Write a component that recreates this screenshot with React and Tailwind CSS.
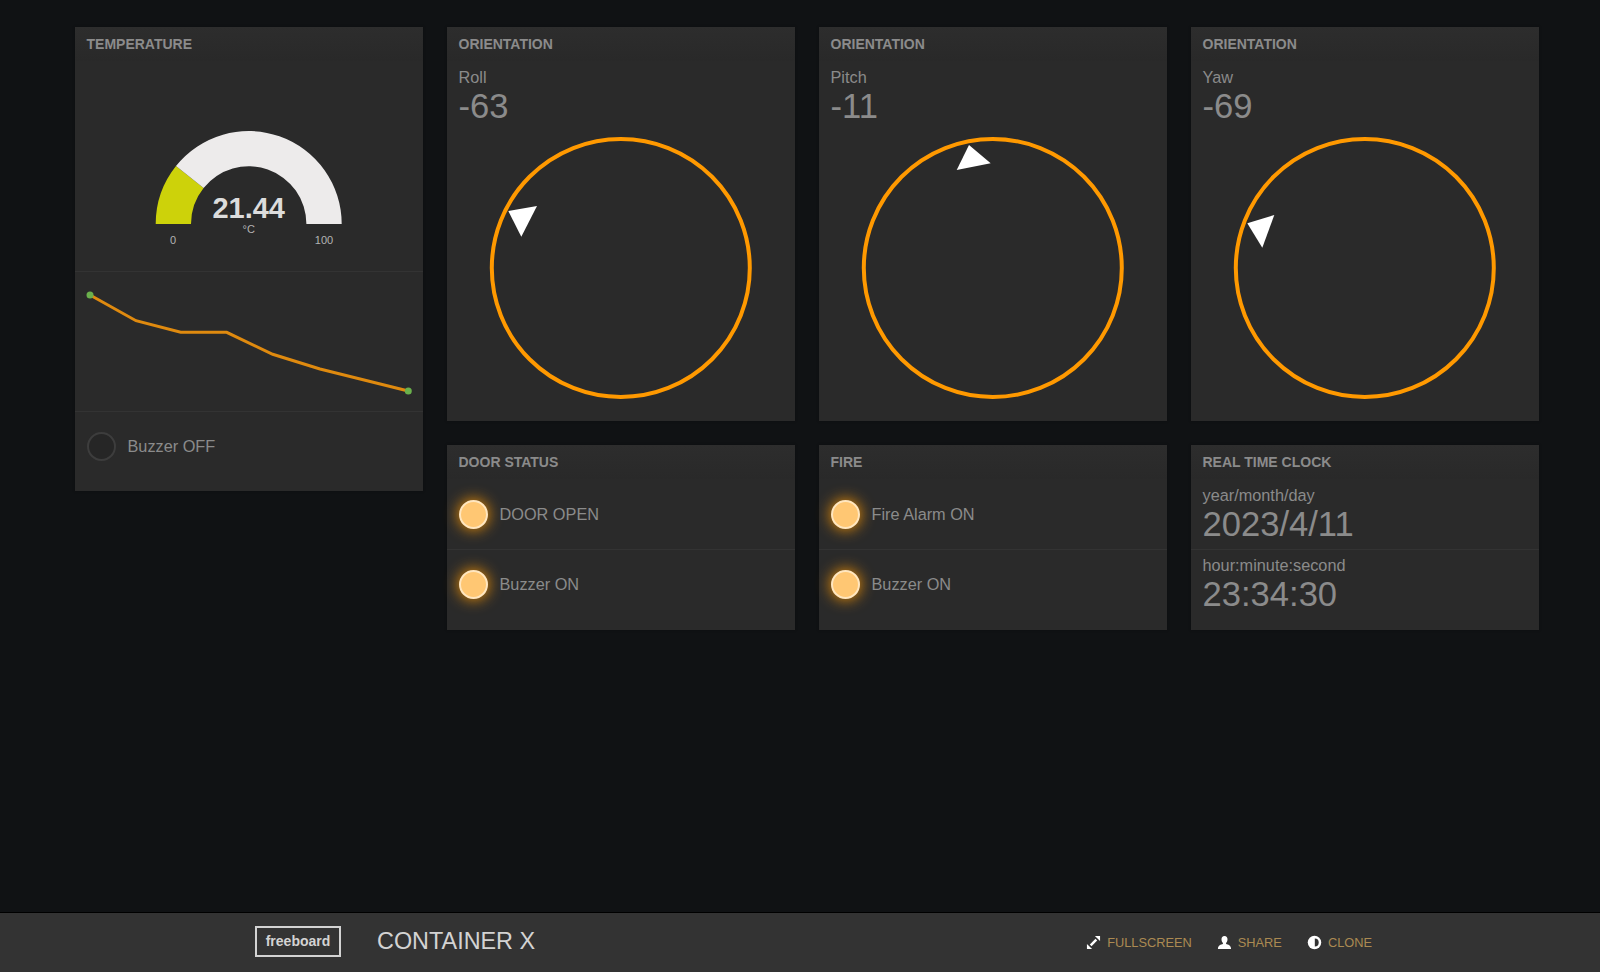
const sans = "font-['Liberation_Sans',Arial,sans-serif]";

function Card({ title, children, className = "pb-[10px]" }) {
  return (
    <div className={`bg-[#2a2a2a] shadow-[0_0_3px_rgba(0,0,0,0.25)] ${className}`}>
      <h2 className="h-[34px] px-[11.5px] bg-gradient-to-b from-[#2d2d2d] to-[#292929] text-[14px] leading-[34px] font-bold uppercase text-[#8b8b8b]">
        {title}
      </h2>
      {children}
    </div>
  );
}

function Indicator({ on, label, divider }) {
  return (
    <div className={`h-[70px] pl-[11.5px] pr-3 flex items-center gap-[12px] ${divider ? "border-t border-[#333333]" : ""}`}>
      <span
        className={`w-[29px] h-[29px] rounded-full border-2 ${
          on
            ? "bg-[#ffc773] border-[#ffe6bf] shadow-[0_0_15px_#ff9900]"
            : "bg-[#262626] border-[#3d3d3d]"
        }`}
      />
      <span className="text-[16.3px] text-[#8b8b8b]">{label}</span>
    </div>
  );
}

function TextBlock({ label, value, divider }) {
  return (
    <div className={`h-[70px] px-[11.5px] ${divider ? "pt-[5px] border-t border-[#333333]" : "pt-[6px]"}`}>
      <div className="text-[16.3px] leading-[20px] text-[#8b8b8b]">{label}</div>
      <div className="text-[34.6px] leading-[38px] text-[#8b8b8b]">{value}</div>
    </div>
  );
}

function Dial({ label, value, needle }) {
  return (
    <Card title="Orientation">
      <div className="h-[66px] px-[11.5px] pt-[6px]">
        <div className="text-[16.3px] leading-[20px] text-[#8b8b8b]">{label}</div>
        <div className="text-[34.6px] leading-[38px] text-[#8b8b8b]">{value}</div>
      </div>
      <svg viewBox="0 0 348 284" className="block w-[348px] h-[284px]">
        <circle cx="173.8" cy="141" r="129" fill="none" stroke="#ff9900" strokeWidth="4" />
        <polygon points={needle} fill="#ffffff" />
      </svg>
    </Card>
  );
}

function Gauge() {
  return (
    <svg viewBox="0 0 348 210" className={`block w-[348px] h-[210px] ${sans}`}>
      <path d="M80.7 163A93 93 0 0 1 101 105L128.6 127A57.7 57.7 0 0 0 116 163Z" fill="#cdd20a" />
      <path d="M101 105A93 93 0 0 1 266.7 163L231.4 163A57.7 57.7 0 0 0 128.6 127Z" fill="#edebeb" />
      <text x="173.7" y="157" textAnchor="middle" fontSize="29" fontWeight="700" fill="#dcdcdc">
        21.44
      </text>
      <text x="173.7" y="172" textAnchor="middle" fontSize="11" fill="#b3b3b3">
        °C
      </text>
      <text x="98" y="183" textAnchor="middle" fontSize="11" fill="#b3b3b3">
        0
      </text>
      <text x="249" y="183" textAnchor="middle" fontSize="11" fill="#b3b3b3">
        100
      </text>
    </svg>
  );
}

function Sparkline() {
  return (
    <div className="border-t border-[#333333]">
      <svg viewBox="0 1 348 139" className="block w-[348px] h-[139px]">
        <polyline
          points="15,24 61,49.7 105.7,61.3 151.7,61.3 197.7,83.3 245,98 333.3,120"
          fill="none"
          stroke="#df8a0f"
          strokeWidth="3"
        />
        <circle cx="15" cy="24" r="3.5" fill="#6ab04c" />
        <circle cx="333.3" cy="120" r="3.5" fill="#6ab04c" />
      </svg>
    </div>
  );
}

const FullscreenIcon = () => (
  <svg viewBox="0 0 16 16" className="w-[15px] h-[15px]" fill="#ffffff">
    <polygon points="9.5,1 15,1 15,6.5" />
    <polygon points="1,9.5 1,15 6.5,15" />
    <line x1="5" y1="11" x2="11" y2="5" stroke="#ffffff" strokeWidth="2.6" />
  </svg>
);

const UserIcon = () => (
  <svg viewBox="0 0 16 16" className="w-[15px] h-[15px]" fill="#ffffff">
    <path d="M8 1C5.9 1 4.8 2.5 4.8 4.5C4.8 6.2 5.5 7.6 6.3 8.4V9.6C4.2 10.2 1 11 1 15H15C15 11 11.8 10.2 9.7 9.6V8.4C10.5 7.6 11.2 6.2 11.2 4.5C11.2 2.5 10.1 1 8 1Z" />
  </svg>
);

const AdjustIcon = () => (
  <svg viewBox="0 0 16 16" className="w-[15px] h-[15px]">
    <circle cx="8" cy="8" r="7.2" fill="#ffffff" />
    <path d="M8.3 3.8A4.2 4.2 0 0 1 8.3 12.2Z" fill="#333333" />
  </svg>
);

function FooterLink({ icon, label, className }) {
  return (
    <a className={`flex items-center gap-[6px] text-[12.8px] text-[#ab8a52] ${className}`}>
      {icon}
      {label}
    </a>
  );
}

export default function App() {
  return (
    <div className={`h-screen flex flex-col overflow-hidden bg-[#101214] ${sans}`}>
      <main className="flex-1 pt-[27px] pl-[75px]">
        <div className="grid grid-cols-[repeat(4,348px)] gap-6 items-start">
          <div className="row-span-2">
            <Card title="Temperature">
              <Gauge />
              <Sparkline />
              <Indicator label="Buzzer OFF" divider />
            </Card>
          </div>
          <Dial label="Roll" value="-63" needle="61.3,84 90,79 74.3,109.7" />
          <Dial label="Pitch" value="-11" needle="150,18 171.7,36.3 137.7,43" />
          <Dial label="Yaw" value="-69" needle="56.3,96.3 83.3,88 71.3,120.7" />
          <Card title="Door Status" className="pb-[11px]">
            <Indicator on label="DOOR OPEN" />
            <Indicator on label="Buzzer ON" divider />
          </Card>
          <Card title="Fire" className="pb-[11px]">
            <Indicator on label="Fire Alarm ON" />
            <Indicator on label="Buzzer ON" divider />
          </Card>
          <Card title="Real Time Clock" className="pb-[11px]">
            <TextBlock label="year/month/day" value="2023/4/11" />
            <TextBlock label="hour:minute:second" value="23:34:30" divider />
          </Card>
        </div>
      </main>
      <footer className="h-[60px] border-t border-black bg-[#333333] pl-[255px] pr-[228px] pb-[2px] flex items-center">
        <div className="h-[31px] w-[86px] border-2 border-[#d3d3d3] flex items-center justify-center text-[14px] font-bold text-[#d3d3d3]">
          freeboard
        </div>
        <h1 className="ml-[36px] text-[23.4px] text-[#d3d3d3]">CONTAINER X</h1>
        <nav className="ml-auto mt-[2px] flex items-center">
          <FooterLink icon={<FullscreenIcon />} label="FULLSCREEN" />
          <FooterLink icon={<UserIcon />} label="SHARE" className="ml-[25px]" />
          <FooterLink icon={<AdjustIcon />} label="CLONE" className="ml-[25px]" />
        </nav>
      </footer>
    </div>
  );
}
